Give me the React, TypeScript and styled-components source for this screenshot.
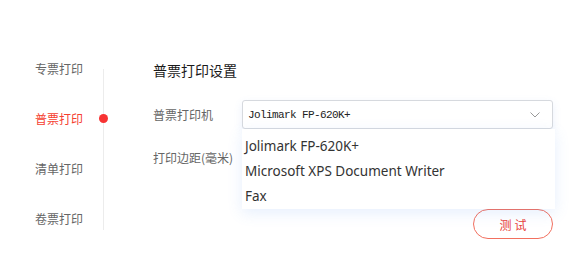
import React from 'react';
import styled, { createGlobalStyle } from 'styled-components';

const Global = createGlobalStyle`
    html, body {
        margin: 0;
        padding: 0;
        background: #fff;
    }
    body {
        font-family: 'Noto Sans', 'Noto Sans CJK SC', sans-serif;
    }
`;

const Root = styled.div`
    display: flex;
    width: 578px;
    height: 263px;
    overflow: hidden;
`;

const Nav = styled.div`
    width: 104px;
    flex: 0 0 auto;
    padding-top: 69px;
`;

const NavList = styled.div`
    height: 161px;
    border-right: 1px solid #ececec;
    display: flex;
    flex-direction: column;
`;

const NavItem = styled.div<{ $active?: boolean }>`
    position: relative;
    height: 50px;
    flex: 0 0 50px;
    display: flex;
    align-items: center;
    padding-left: 35px;
    font-size: 12px;
    font-family: 'Noto Sans CJK SC', sans-serif;
    color: ${(p) => (p.$active ? '#f5402f' : '#666')};
    &:first-child {
        margin-top: -26px;
    }
`;

const Dot = styled.span`
    position: absolute;
    right: -5px;
    top: 50%;
    width: 9px;
    height: 9px;
    margin-top: -4px;
    border-radius: 50%;
    background: #f73333;
`;

const Content = styled.div`
    flex: 0 0 auto;
    margin-left: 49px;
    padding-top: 60px;
    display: flex;
    flex-direction: column;
`;

const Title = styled.div`
    height: 20px;
    line-height: 20px;
    font-size: 14px;
    font-family: 'Noto Sans CJK SC', sans-serif;
    color: #1a1a1a;
`;

const Row = styled.div<{ $top: number }>`
    display: flex;
    align-items: center;
    height: 29px;
    margin-top: ${(p) => p.$top}px;
`;

const Label = styled.div`
    width: 89px;
    font-size: 12px;
    font-family: 'Noto Sans CJK SC', sans-serif;
    color: #666;
`;

const SelectWrap = styled.div`
    position: relative;
    width: 311px;
    height: 29px;
`;

const SelectBox = styled.div`
    box-sizing: border-box;
    height: 29px;
    border: 1px solid #d6d9de;
    border-radius: 3px;
    display: flex;
    align-items: center;
    justify-content: space-between;
    padding: 0 12px 0 5px;
    font-family: 'Liberation Mono', monospace;
    font-size: 11px;
    letter-spacing: -0.6px;
    color: #222;
    background: #fff;
    box-shadow: 0 3px 8px rgba(90, 140, 230, 0.12);
`;

const Menu = styled.div`
    position: absolute;
    top: 29px;
    left: 0;
    width: 313px;
    height: 80px;
    padding-top: 5px;
    box-sizing: border-box;
    background: #fff;
    box-shadow: 0 4px 14px rgba(80, 140, 240, 0.14);
    z-index: 2;
`;

const Option = styled.div`
    height: 25px;
    line-height: 25px;
    padding-left: 3px;
    font-size: 13.5px;
    font-family: 'Noto Sans', sans-serif;
    color: #333;
`;

const ButtonRow = styled.div`
    display: flex;
    justify-content: flex-end;
    margin-top: 37px;
`;

const TestButton = styled.button`
    width: 80px;
    height: 30px;
    border: 1px solid #f2705f;
    border-radius: 15px;
    background: #fff;
    color: #e8413a;
    font-size: 12px;
    font-family: 'Noto Sans CJK SC', sans-serif;
    letter-spacing: 3px;
    padding: 0 0 0 3px;
`;

const Chevron = () => (
    <svg width="10" height="6" viewBox="0 0 10 6">
        <path d="M0.5 0.5 L5 5 L9.5 0.5" fill="none" stroke="#999" strokeWidth="1" />
    </svg>
);

const navItems = ['专票打印', '普票打印', '清单打印', '卷票打印'];
const printers = ['Jolimark FP-620K+', 'Microsoft XPS Document Writer', 'Fax'];

export default function App() {
    return (
        <Root>
            <Global />
            <Nav>
                <NavList>
                    {navItems.map((n, i) => (
                        <NavItem key={n} $active={i === 1}>
                            {n}
                            {i === 1 && <Dot />}
                        </NavItem>
                    ))}
                </NavList>
            </Nav>
            <Content>
                <Title>普票打印设置</Title>
                <Row $top={20}>
                    <Label>普票打印机</Label>
                    <SelectWrap>
                        <SelectBox>
                            <span>Jolimark FP-620K+</span>
                            <Chevron />
                        </SelectBox>
                        <Menu>
                            {printers.map((p) => (
                                <Option key={p}>{p}</Option>
                            ))}
                        </Menu>
                    </SelectWrap>
                </Row>
                <Row $top={14}>
                    <Label>打印边距(毫米)</Label>
                </Row>
                <ButtonRow>
                    <TestButton>测试</TestButton>
                </ButtonRow>
            </Content>
        </Root>
    );
}
